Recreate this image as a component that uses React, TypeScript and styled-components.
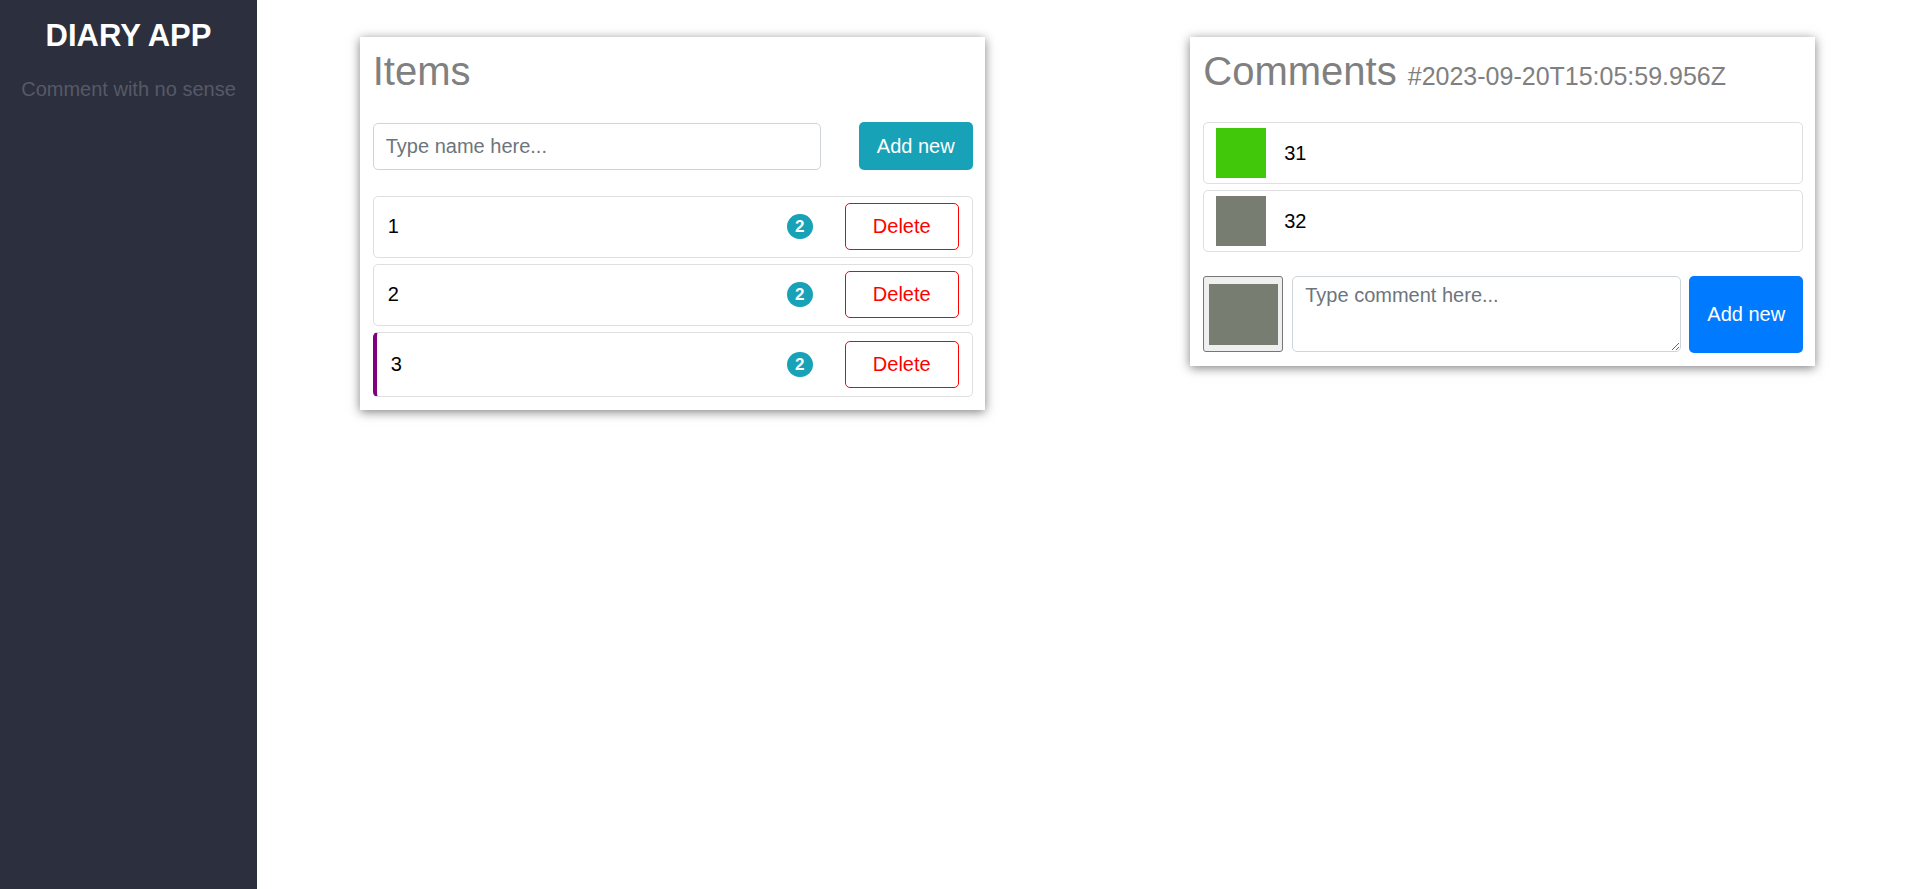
import React from 'react';
import styled, { createGlobalStyle } from 'styled-components';

const GlobalStyle = createGlobalStyle`
  body {
    margin: 0;
    font-family: 'Liberation Sans', Arial, sans-serif;
    background: #ffffff;
  }
  * {
    box-sizing: border-box;
  }
`;

type Item = { id: number, name: string, count: number, selected?: boolean };
type Comment = { id: number, text: string, color: string };

const items: Item[] = [
  { id: 1, name: '1', count: 2 },
  { id: 2, name: '2', count: 2 },
  { id: 3, name: '3', count: 2, selected: true },
];

const comments: Comment[] = [
  { id: 31, text: '31', color: '#41c80a' },
  { id: 32, text: '32', color: '#787d72' },
];

const App = () => {
  return (
    <Layout>
      <GlobalStyle />
      <Sidebar>
        <AppTitle>DIARY APP</AppTitle>
        <AppSubtitle>Comment with no sense</AppSubtitle>
      </Sidebar>
      <Main>
        <Column>
          <Card>
            <CardTitle>Items</CardTitle>
            <FormRow>
              <TextInput placeholder="Type name here..." />
              <AddButton $variant="info">Add new</AddButton>
            </FormRow>
            <List>
              {items.map((item) => (
                <ItemRow key={item.id} $selected={item.selected}>
                  <ItemName>{item.name}</ItemName>
                  <Badge>{item.count}</Badge>
                  <DeleteButton>Delete</DeleteButton>
                </ItemRow>
              ))}
            </List>
          </Card>
        </Column>
        <Column>
          <Card>
            <CardTitle>
              Comments <Stamp>#2023-09-20T15:05:59.956Z</Stamp>
            </CardTitle>
            <List>
              {comments.map((c) => (
                <CommentRow key={c.id}>
                  <Swatch $color={c.color} />
                  <CommentText>{c.text}</CommentText>
                </CommentRow>
              ))}
            </List>
            <CommentForm>
              <ColorPicker>
                <ColorFill />
              </ColorPicker>
              <TextArea placeholder="Type comment here..." />
              <AddButton $variant="primary" $tall>Add new</AddButton>
            </CommentForm>
          </Card>
        </Column>
      </Main>
    </Layout>
  );
};

const Layout = styled.div`
  display: flex;
  min-height: 100vh;
`;

const Sidebar = styled.aside`
  width: 257px;
  flex: none;
  background: #2c2f3e;
  padding-top: 18px;
  text-align: center;
`;

const AppTitle = styled.h1`
  margin: 0;
  font-size: 31px;
  line-height: 36px;
  font-weight: 700;
  color: #ffffff;
`;

const AppSubtitle = styled.p`
  margin: 23px 0 0;
  font-size: 20px;
  line-height: 24px;
  color: #565a66;
`;

const Main = styled.main`
  flex: 1;
  display: grid;
  grid-template-columns: 1fr 1fr;
  align-items: start;
  padding-top: 37px;
`;

const Column = styled.div`
  display: flex;
  justify-content: center;
`;

const Card = styled.section`
  width: 625px;
  background: #ffffff;
  padding: 10px 12px 13px 13px;
  box-shadow: 0 2px 10px rgba(0, 0, 0, 0.5);
`;

const CardTitle = styled.h2`
  margin: 0 0 27px;
  height: 48px;
  font-size: 40px;
  line-height: 48px;
  font-weight: 400;
  color: #808080;
  white-space: nowrap;
`;

const Stamp = styled.span`
  font-size: 25px;
  line-height: 1;
`;

const FormRow = styled.div`
  display: flex;
  align-items: center;
  gap: 38px;
`;

const TextInput = styled.input`
  flex: 1;
  height: 47px;
  padding: 0 12px;
  font: inherit;
  font-size: 20px;
  color: #495057;
  border: 1px solid #ced4da;
  border-radius: 5px;
  outline: none;
  &::placeholder {
    color: #6c757d;
  }
`;

const AddButton = styled.button<{ $variant: 'info' | 'primary', $tall?: boolean }>`
  width: 114px;
  height: ${({ $tall }) => ($tall ? '77px' : '48px')};
  flex: none;
  border: none;
  border-radius: 5px;
  font: inherit;
  font-size: 20px;
  color: #ffffff;
  background: ${({ $variant }) => ($variant === 'info' ? '#17a2b8' : '#007bff')};
`;

const List = styled.div`
  display: flex;
  flex-direction: column;
  gap: 6px;
  margin-top: 26px;
  &:first-of-type {
    margin-top: 0;
  }
`;

const ItemRow = styled.div<{ $selected?: boolean }>`
  display: flex;
  align-items: center;
  border: 1px solid #dfdfdf;
  border-left: ${({ $selected }) => ($selected ? '4px solid #800080' : '1px solid #dfdfdf')};
  border-radius: 5px;
  padding: ${({ $selected }) => ($selected ? '8px 13px 8px 14px' : '6px 13px 7px 14px')};
`;

const ItemName = styled.span`
  flex: 1;
  font-size: 20px;
  color: #000000;
`;

const Badge = styled.span`
  width: 26px;
  height: 25px;
  border-radius: 13px;
  background: #17a2b8;
  color: #ffffff;
  font-size: 17px;
  font-weight: 700;
  display: flex;
  align-items: center;
  justify-content: center;
`;

const DeleteButton = styled.button`
  width: 114px;
  height: 47px;
  margin-left: 32px;
  background: #ffffff;
  border: 1px solid #ff0000;
  border-radius: 5px;
  font: inherit;
  font-size: 20px;
  color: #ff0000;
`;

const CommentRow = styled.div`
  display: flex;
  align-items: center;
  gap: 18px;
  border: 1px solid #dfdfdf;
  border-radius: 5px;
  padding: 5px 12px;
`;

const Swatch = styled.div<{ $color: string }>`
  width: 50px;
  height: 50px;
  background: ${({ $color }) => $color};
`;

const CommentText = styled.span`
  font-size: 20px;
  color: #000000;
`;

const CommentForm = styled.div`
  display: flex;
  margin-top: 24px;
  height: 77px;
`;

const ColorPicker = styled.div`
  width: 80px;
  height: 76px;
  flex: none;
  background: #efefef;
  border: 1px solid #767676;
  border-radius: 3px;
  padding: 7px 4px 6px 5px;
`;

const ColorFill = styled.div`
  width: 100%;
  height: 100%;
  background: #787d72;
`;

const TextArea = styled.textarea`
  flex: 1;
  height: 76px;
  margin: 0 8px 0 9px;
  padding: 7px 12px;
  font: inherit;
  font-size: 20px;
  border: 1px solid #ced4da;
  border-radius: 5px;
  outline: none;
  &::placeholder {
    color: #6c757d;
  }
`;

export default App;
